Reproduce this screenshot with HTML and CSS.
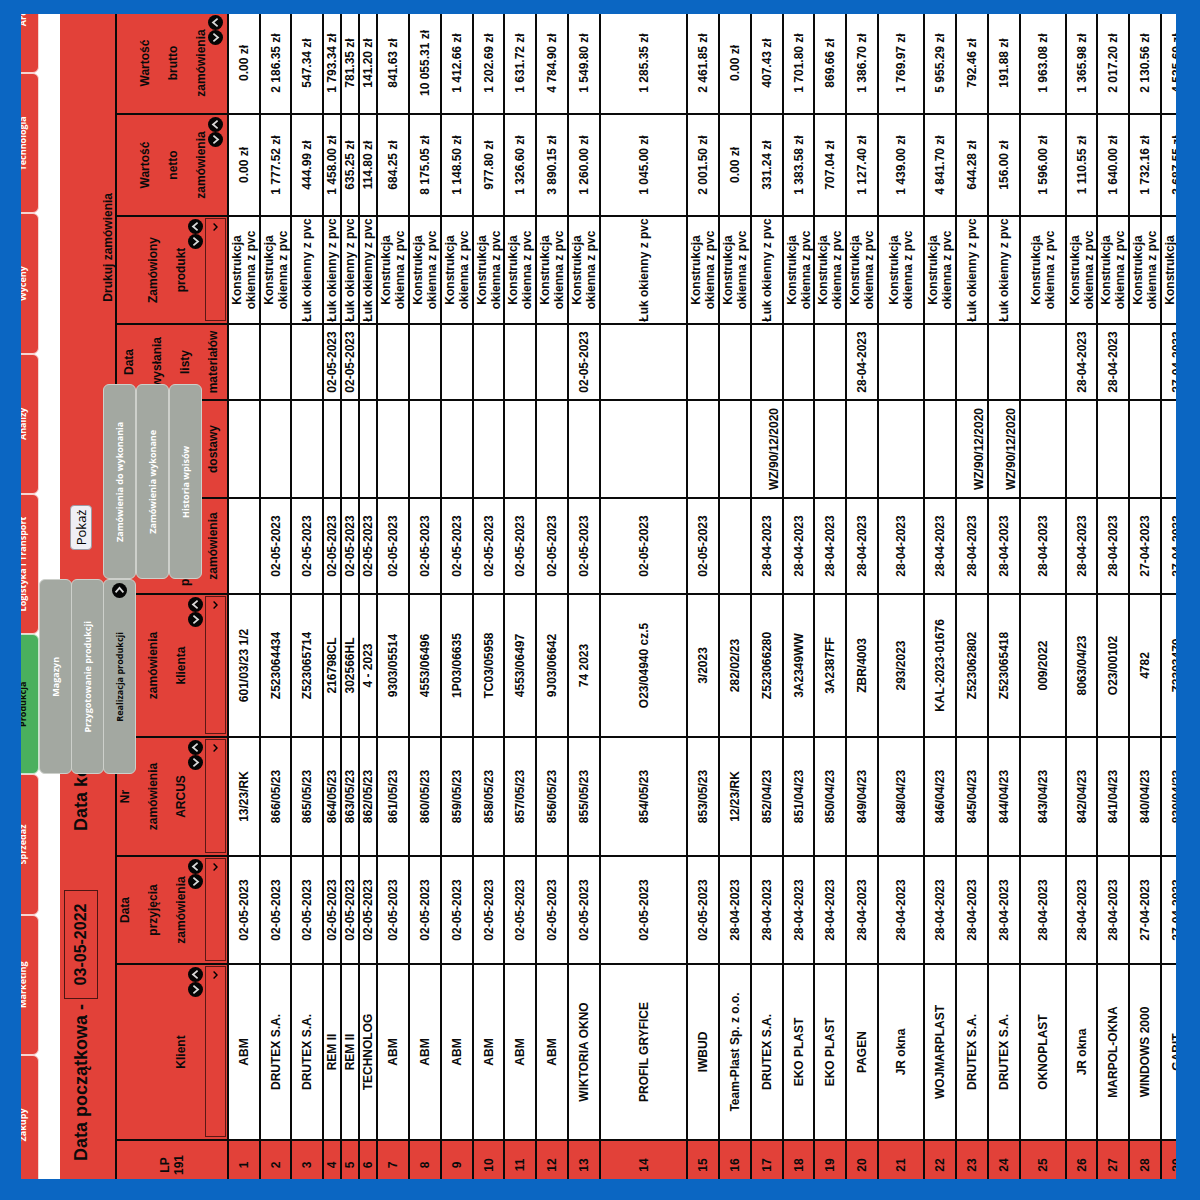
FILE: index.html
```html
<!DOCTYPE html>
<html lang="pl">
<head>
<meta charset="utf-8">
<meta name="viewport" content="width=device-width, initial-scale=1">
<title>Zamówienia do wykonania</title>
<link rel="stylesheet" href="styles.css">
</head>
<body>
<svg class="sprite" aria-hidden="true">
  <symbol id="up" viewBox="0 0 15 15"><circle cx="7.5" cy="7.5" r="7.5"/><path d="M3.6 9.6 7.5 5l3.9 4.6"/></symbol>
  <symbol id="down" viewBox="0 0 15 15"><circle cx="7.5" cy="7.5" r="7.5"/><path d="M3.6 5.4 7.5 10l3.9-4.6"/></symbol>
  <symbol id="next" viewBox="0 0 15 15"><circle cx="7.5" cy="7.5" r="7.5"/><path d="M5.6 3.6l4.6 3.9-4.6 3.9"/></symbol>
</svg>
<div class="screen">
  <nav class="tabs">
    <div class="tab"><a href="#">Zakupy</a></div>
    <div class="tab"><a href="#">Marketing</a></div>
    <div class="tab"><a href="#">Sprzedaż</a></div>
    <div class="tab active"><a href="#">Produkcja</a>
      <ul class="menu">
        <li><a href="#">Magazyn</a></li>
        <li><a href="#">Przygotowanie produkcji</a></li>
        <li class="open"><a href="#">Realizacja produkcji<svg class="icon next"><use href="#next"/></svg></a>
          <ul class="menu submenu">
            <li><a href="#">Zamówienia do wykonania</a></li>
            <li><a href="#">Zamówienia wykonane</a></li>
            <li><a href="#">Historia wpisów</a></li>
          </ul>
        </li>
      </ul>
    </div>
    <div class="tab"><a href="#">Logistyka i Transport</a></div>
    <div class="tab"><a href="#">Analizy</a></div>
    <div class="tab"><a href="#">Wyceny</a></div>
    <div class="tab"><a href="#">Technologia</a></div>
    <div class="tab"><a href="#">Archiwum</a></div>
  </nav>
  <main class="panel">
    <form class="range">
      <div class="field"><label for="from">Data początkowa -</label><input id="from" type="text" value="03-05-2022"></div>
      <div class="field"><label for="to">Data końcowa -</label><input id="to" type="text" value="03-05-2023"></div>
      <button class="show" type="button">Pokaż</button>
    </form>
    <div class="print"><a href="#">Drukuj zamówienia</a></div>
    <table class="orders">
      <colgroup><col class="c-lp"><col class="c-client"><col class="c-accepted"><col class="c-arcus"><col class="c-number"><col class="c-confirmed"><col class="c-delivery"><col class="c-sent"><col class="c-product"><col class="c-money"><col class="c-money"></colgroup>
      <thead>
        <tr>
          <th class="lp">LP<br>191</th>
          <th>Klient<div class="sort"><button type="button" aria-label="Klient malejąco"><svg class="icon"><use href="#down"/></svg></button><button type="button" aria-label="Klient rosnąco"><svg class="icon"><use href="#up"/></svg></button></div><select aria-label="Klient"><option></option></select></th>
          <th>Data<br>przyjęcia<br>zamówienia<div class="sort"><button type="button" aria-label="Data malejąco"><svg class="icon"><use href="#down"/></svg></button><button type="button" aria-label="Data rosnąco"><svg class="icon"><use href="#up"/></svg></button></div><select aria-label="Data przyjęcia"><option></option></select></th>
          <th>Nr<br>zamówienia<br>ARCUS<div class="sort"><button type="button" aria-label="Nr ARCUS malejąco"><svg class="icon"><use href="#down"/></svg></button><button type="button" aria-label="Nr ARCUS rosnąco"><svg class="icon"><use href="#up"/></svg></button></div><select aria-label="Nr ARCUS"><option></option></select></th>
          <th>Nr<br>zamówienia<br>klienta<div class="sort"><button type="button" aria-label="Nr klienta malejąco"><svg class="icon"><use href="#down"/></svg></button><button type="button" aria-label="Nr klienta rosnąco"><svg class="icon"><use href="#up"/></svg></button></div><select aria-label="Nr klienta"><option></option></select></th>
          <th>Data<br>potwierdzenia<br>zamówienia</th>
          <th>Data<br>dostawy</th>
          <th>Data<br>wysłania<br>listy<br>materiałów</th>
          <th>Zamówiony<br>produkt<div class="sort"><button type="button" aria-label="Produkt malejąco"><svg class="icon"><use href="#down"/></svg></button><button type="button" aria-label="Produkt rosnąco"><svg class="icon"><use href="#up"/></svg></button></div><select aria-label="Produkt"><option></option></select></th>
          <th class="money">Wartość<br>netto<br>zamówienia<div class="sort"><button type="button" aria-label="Netto malejąco"><svg class="icon"><use href="#down"/></svg></button><button type="button" aria-label="Netto rosnąco"><svg class="icon"><use href="#up"/></svg></button></div></th>
          <th class="money">Wartość<br>brutto<br>zamówienia<div class="sort"><button type="button" aria-label="Brutto malejąco"><svg class="icon"><use href="#down"/></svg></button><button type="button" aria-label="Brutto rosnąco"><svg class="icon"><use href="#up"/></svg></button></div></th>
        </tr>
      </thead>
      <tbody>
        <tr><td>1</td><td>ABM</td><td>02-05-2023</td><td>13/23/RK</td><td>601/03/23 1/2</td><td></td><td></td><td></td><td>Konstrukcja okienna z pvc</td><td>0.00 zł</td><td>0.00 zł</td></tr>
        <tr><td>2</td><td>DRUTEX S.A.</td><td>02-05-2023</td><td>866/05/23</td><td>Z523064434</td><td>02-05-2023</td><td></td><td></td><td>Konstrukcja okienna z pvc</td><td>1 777.52 zł</td><td>2 186.35 zł</td></tr>
        <tr><td>3</td><td>DRUTEX S.A.</td><td>02-05-2023</td><td>865/05/23</td><td>Z523065714</td><td>02-05-2023</td><td></td><td></td><td>Łuk okienny z pvc</td><td>444.99 zł</td><td>547.34 zł</td></tr>
        <tr class="short"><td>4</td><td>REM II</td><td>02-05-2023</td><td>864/05/23</td><td>216798CL</td><td>02-05-2023</td><td></td><td>02-05-2023</td><td>Łuk okienny z pvc</td><td>1 458.00 zł</td><td>1 793.34 zł</td></tr>
        <tr class="short"><td>5</td><td>REM II</td><td>02-05-2023</td><td>863/05/23</td><td>302566HL</td><td>02-05-2023</td><td></td><td>02-05-2023</td><td>Łuk okienny z pvc</td><td>635.25 zł</td><td>781.35 zł</td></tr>
        <tr class="short"><td>6</td><td>TECHNOLOG</td><td>02-05-2023</td><td>862/05/23</td><td>4 - 2023</td><td>02-05-2023</td><td></td><td></td><td>Łuk okienny z pvc</td><td>114.80 zł</td><td>141.20 zł</td></tr>
        <tr><td>7</td><td>ABM</td><td>02-05-2023</td><td>861/05/23</td><td>9303/05514</td><td>02-05-2023</td><td></td><td></td><td>Konstrukcja okienna z pvc</td><td>684.25 zł</td><td>841.63 zł</td></tr>
        <tr><td>8</td><td>ABM</td><td>02-05-2023</td><td>860/05/23</td><td>4553/06496</td><td>02-05-2023</td><td></td><td></td><td>Konstrukcja okienna z pvc</td><td>8 175.05 zł</td><td>10 055.31 zł</td></tr>
        <tr><td>9</td><td>ABM</td><td>02-05-2023</td><td>859/05/23</td><td>1P03/06635</td><td>02-05-2023</td><td></td><td></td><td>Konstrukcja okienna z pvc</td><td>1 148.50 zł</td><td>1 412.66 zł</td></tr>
        <tr><td>10</td><td>ABM</td><td>02-05-2023</td><td>858/05/23</td><td>TC03/05958</td><td>02-05-2023</td><td></td><td></td><td>Konstrukcja okienna z pvc</td><td>977.80 zł</td><td>1 202.69 zł</td></tr>
        <tr><td>11</td><td>ABM</td><td>02-05-2023</td><td>857/05/23</td><td>4553/06497</td><td>02-05-2023</td><td></td><td></td><td>Konstrukcja okienna z pvc</td><td>1 326.60 zł</td><td>1 631.72 zł</td></tr>
        <tr><td>12</td><td>ABM</td><td>02-05-2023</td><td>856/05/23</td><td>9J03/06642</td><td>02-05-2023</td><td></td><td></td><td>Konstrukcja okienna z pvc</td><td>3 890.15 zł</td><td>4 784.90 zł</td></tr>
        <tr><td>13</td><td>WIKTORIA OKNO</td><td>02-05-2023</td><td>855/05/23</td><td>74 2023</td><td>02-05-2023</td><td></td><td>02-05-2023</td><td>Konstrukcja okienna z pvc</td><td>1 260.00 zł</td><td>1 549.80 zł</td></tr>
        <tr class="tallest"><td>14</td><td>PROFIL GRYFICE</td><td>02-05-2023</td><td>854/05/23</td><td>O23/04940 cz.5</td><td>02-05-2023</td><td></td><td></td><td>Łuk okienny z pvc</td><td>1 045.00 zł</td><td>1 285.35 zł</td></tr>
        <tr><td>15</td><td>IWBUD</td><td>02-05-2023</td><td>853/05/23</td><td>3/2023</td><td>02-05-2023</td><td></td><td></td><td>Konstrukcja okienna z pvc</td><td>2 001.50 zł</td><td>2 461.85 zł</td></tr>
        <tr><td>16</td><td>Team-Plast Sp. z o.o.</td><td>28-04-2023</td><td>12/23/RK</td><td>282/02/23</td><td></td><td></td><td></td><td>Konstrukcja okienna z pvc</td><td>0.00 zł</td><td>0.00 zł</td></tr>
        <tr><td>17</td><td>DRUTEX S.A.</td><td>28-04-2023</td><td>852/04/23</td><td>Z523066280</td><td>28-04-2023</td><td class="doc">WZ/90/12/2020</td><td></td><td>Łuk okienny z pvc</td><td>331.24 zł</td><td>407.43 zł</td></tr>
        <tr><td>18</td><td>EKO PLAST</td><td>28-04-2023</td><td>851/04/23</td><td>3A2349WW</td><td>28-04-2023</td><td></td><td></td><td>Konstrukcja okienna z pvc</td><td>1 383.58 zł</td><td>1 701.80 zł</td></tr>
        <tr><td>19</td><td>EKO PLAST</td><td>28-04-2023</td><td>850/04/23</td><td>3A2387FF</td><td>28-04-2023</td><td></td><td></td><td>Konstrukcja okienna z pvc</td><td>707.04 zł</td><td>869.66 zł</td></tr>
        <tr><td>20</td><td>PAGEN</td><td>28-04-2023</td><td>849/04/23</td><td>ZBR/4003</td><td>28-04-2023</td><td></td><td>28-04-2023</td><td>Konstrukcja okienna z pvc</td><td>1 127.40 zł</td><td>1 386.70 zł</td></tr>
        <tr class="tall"><td>21</td><td>JR okna</td><td>28-04-2023</td><td>848/04/23</td><td>293/2023</td><td>28-04-2023</td><td></td><td></td><td>Konstrukcja okienna z pvc</td><td>1 439.00 zł</td><td>1 769.97 zł</td></tr>
        <tr><td>22</td><td>WOJMARPLAST</td><td>28-04-2023</td><td>846/04/23</td><td>KAL-2023-01676</td><td>28-04-2023</td><td></td><td></td><td>Konstrukcja okienna z pvc</td><td>4 841.70 zł</td><td>5 955.29 zł</td></tr>
        <tr><td>23</td><td>DRUTEX S.A.</td><td>28-04-2023</td><td>845/04/23</td><td>Z523062802</td><td>28-04-2023</td><td class="doc">WZ/90/12/2020</td><td></td><td>Łuk okienny z pvc</td><td>644.28 zł</td><td>792.46 zł</td></tr>
        <tr><td>24</td><td>DRUTEX S.A.</td><td>28-04-2023</td><td>844/04/23</td><td>Z523065418</td><td>28-04-2023</td><td class="doc">WZ/90/12/2020</td><td></td><td>Łuk okienny z pvc</td><td>156.00 zł</td><td>191.88 zł</td></tr>
        <tr class="tall"><td>25</td><td>OKNOPLAST</td><td>28-04-2023</td><td>843/04/23</td><td>009/2022</td><td>28-04-2023</td><td></td><td></td><td>Konstrukcja okienna z pvc</td><td>1 596.00 zł</td><td>1 963.08 zł</td></tr>
        <tr><td>26</td><td>JR okna</td><td>28-04-2023</td><td>842/04/23</td><td>8063/04/23</td><td>28-04-2023</td><td></td><td>28-04-2023</td><td>Konstrukcja okienna z pvc</td><td>1 110.55 zł</td><td>1 365.98 zł</td></tr>
        <tr><td>27</td><td>MARPOL-OKNA</td><td>28-04-2023</td><td>841/04/23</td><td>O23/00102</td><td>28-04-2023</td><td></td><td>28-04-2023</td><td>Konstrukcja okienna z pvc</td><td>1 640.00 zł</td><td>2 017.20 zł</td></tr>
        <tr><td>28</td><td>WINDOWS 2000</td><td>27-04-2023</td><td>840/04/23</td><td>4782</td><td>27-04-2023</td><td></td><td></td><td>Konstrukcja okienna z pvc</td><td>1 732.16 zł</td><td>2 130.56 zł</td></tr>
        <tr><td>29</td><td>GABIT</td><td>27-04-2023</td><td>839/04/23</td><td>Z2303470</td><td>27-04-2023</td><td></td><td>27-04-2023</td><td>Konstrukcja okienna z pvc</td><td>3 687.55 zł</td><td>4 535.69 zł</td></tr>
      </tbody>
    </table>
  </main>
</div>
</body>
</html>
```
FILE: styles.css
```css
* { box-sizing: border-box; }

body {
  margin: 0;
  padding: 14px 24px 21px 21px;
  height: 100vh;
  overflow: hidden;
  background: #0b66c2;
  font: bold 12px/14px "Liberation Sans", Arial, sans-serif;
  color: #0a0a0a;
}

.sprite { position: absolute; width: 0; height: 0; }

/* The landscape board is turned a quarter turn, so its width follows the window height. */
.screen {
  width: calc(100vh - 35px);
  height: calc(100vw - 45px);
  overflow: hidden;
  background: #fff;
  transform-origin: 0 0;
  transform: rotate(-90deg) translateX(-100%);
}

a { color: inherit; text-decoration: none; }

/* Navigation */
.tabs {
  display: grid;
  grid-template-columns: repeat(9, 1fr);
  margin: -15px -81px 0 -16px;
  font: bold 9px/32px "Open Sans", "Noto Sans", sans-serif;
  color: #fff;
  text-align: center;
}
.tab { position: relative; }
.tab > a {
  display: block;
  height: 33px;
  border: 1px solid #f6d5d2;
  border-radius: 6px;
  background: #e24139;
}
.tab.active > a { background: #4ab05e; color: #0a0a0a; border-color: #c6e6cc; }

.menu {
  position: absolute;
  z-index: 2;
  top: 100%;
  left: 0;
  width: 195px;
  margin: 0;
  padding: 0;
  list-style: none;
}
.menu li { position: relative; }
.menu li + li { margin-top: -1px; }
.submenu li + li { margin-top: 0; }
.menu a {
  position: relative;
  display: block;
  height: 33px;
  border: 1px solid #cdd0cb;
  border-radius: 6px;
  background: #a3a8a1;
  color: #fff;
}
.menu .open > a { color: #0a0a0a; }
.menu .submenu { top: 0; left: 100%; }
.menu .next { position: absolute; top: 8px; right: 3px; }

.icon {
  display: block;
  width: 15px;
  height: 15px;
}
symbol circle { fill: #050505; }
symbol path { fill: none; stroke: #d8d8d8; stroke-width: 1.8; }

/* Panel */
.panel { margin-top: 21px; background: #e24139; }

.range {
  display: flex;
  align-items: center;
  padding: 4px 0 0 18px;
}
.field {
  display: flex;
  align-items: center;
  gap: 5px;
  font-size: 18px;
  white-space: nowrap;
}
.field + .field { margin-left: 59px; }
.field input {
  width: 109px;
  height: 34px;
  padding: 0;
  border: 1px solid #4f1512;
  background: transparent;
  font: bold 16px/20px "Liberation Sans", Arial, sans-serif;
  color: #0a0a0a;
  text-align: center;
}
.show {
  width: 45px;
  height: 22px;
  margin-left: 35px;
  padding: 0;
  border: 1px solid #9c9ca6;
  border-radius: 4px;
  background: #efeff4;
  font: 13px/18px "Open Sans", "Noto Sans", sans-serif;
  color: #000;
}
.print {
  padding: 3px 179px 0 0;
  text-align: right;
}

/* Orders */
.orders {
  width: calc(100% + 13px);
  margin-left: -12px;
  table-layout: fixed;
  border-collapse: collapse;
  background: #fff;
}
.c-lp { width: 50px; }
.c-client { width: 176px; }
.c-accepted, .c-product { width: 108px; }
.c-arcus { width: 119px; }
.c-number { width: 143px; }
.c-confirmed { width: 96px; }
.c-delivery { width: 98px; }
.c-sent { width: 76px; }
.c-money { width: 102px; }

th, td {
  padding: 0;
  border: 2px solid #0a0a0a;
  text-align: center;
}
th {
  height: 112px;
  background: #e24139;
  line-height: 28px;
  vertical-align: bottom;
}
/* Pulls the first label line up so that labels, arrows and filter fit the header row. */
th::before { content: ""; display: block; margin-top: -8px; }
th.lp { line-height: 14px; vertical-align: middle; }
th.lp::before { display: none; }
th.money { padding-bottom: 4px; }
td:first-child { background: #e24139; }
tbody tr { height: 32px; }
tbody tr:nth-child(8n+2) { height: 31px; }
tbody .short { height: 18px; }
tbody .tall { height: 46px; }
tbody .tallest { height: 87px; }
td.doc { padding-top: 14px; }

.sort {
  display: flex;
  justify-content: flex-end;
  margin-top: -7px;
  padding-right: 2px;
}
.sort button {
  width: 15px;
  height: 15px;
  padding: 0;
  border: 0;
  background: none;
}
th select {
  display: block;
  appearance: none;
  width: calc(100% - 3px);
  height: 21px;
  margin: 2px 1px 1px 2px;
  border: 1px solid #5c1815;
  border-radius: 0;
  background: url("data:image/svg+xml,%3Csvg xmlns='http://www.w3.org/2000/svg' width='8' height='5'%3E%3Cpath d='M.6.6 4 4 7.4.6' fill='none' stroke='%23000' stroke-width='1.4'/%3E%3C/svg%3E") no-repeat right 4px center;
}
```
